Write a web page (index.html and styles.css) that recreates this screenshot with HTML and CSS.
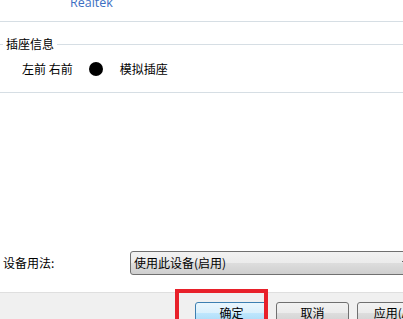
FILE: index.html
```html
<!DOCTYPE html>
<html lang="zh-CN">
<head>
<meta charset="utf-8">
<title>属性</title>
<link rel="stylesheet" href="styles.css">
</head>
<body>
<div class="page">
  <div class="vendor"><span class="vendor-name">Realtek</span></div>
  <div class="group-head"><span class="group-title">插座信息</span></div>
  <div class="jack-row">
    <span class="jack-pos">左前 右前</span>
    <span class="jack-dot"></span>
    <span class="jack-type">模拟插座</span>
  </div>
  <div class="sep"></div>
  <div class="spacer"></div>
  <div class="usage-row">
    <span class="usage-label">设备用法:</span>
    <div class="combo"><span class="combo-text">使用此设备(启用)</span><span class="combo-arrow"></span></div>
  </div>
  <div class="footer">
    <div class="buttons">
      <button class="btn btn-default">确定</button>
      <button class="btn">取消</button>
      <button class="btn">应用(A)</button>
    </div>
    <div class="highlight"></div>
  </div>
</div>
</body>
</html>
```
FILE: styles.css
```css
html, body {
  margin: 0;
  padding: 0;
  background: #ffffff;
}
body {
  font-family: "Noto Sans CJK SC", "Noto Sans", sans-serif;
  font-size: 12px;
  color: #000000;
  overflow: hidden;
}
.page {
  width: 403px;
  height: 319px;
  overflow: hidden;
  display: flex;
  flex-direction: column;
}
.vendor {
  height: 21px;
  border-bottom: 1px solid #d6dee4;
  padding-left: 70px;
  flex: none;
}
.vendor-name {
  display: block;
  font-family: "Open Sans", "Noto Sans", sans-serif;
  font-size: 12.5px;
  line-height: 14px;
  margin-top: -4px;
  color: #3c6fc2;
}
.group-head {
  margin-top: 15px;
  height: 14px;
  display: flex;
  align-items: center;
  flex: none;
}
.group-head::before {
  content: "";
  width: 3px;
  height: 1px;
  background: #d6dee4;
}
.group-head::after {
  content: "";
  flex: 1;
  height: 1px;
  background: #d6dee4;
}
.group-title {
  padding: 0 3px;
  line-height: 14px;
}
.jack-row {
  margin-top: 11px;
  height: 14px;
  padding-left: 22px;
  display: flex;
  align-items: center;
  line-height: 14px;
  flex: none;
}
.jack-dot {
  width: 14px;
  height: 14px;
  border-radius: 50%;
  background: #000000;
  margin-left: 16px;
  margin-right: 17px;
}
.sep {
  margin-top: 16px;
  border-top: 1px solid #d6dee4;
  flex: none;
}
.spacer {
  flex: 1;
}
.usage-row {
  height: 24px;
  display: flex;
  align-items: center;
  padding-left: 3px;
  flex: none;
}
.usage-label {
  width: 127px;
  flex: none;
  line-height: 14px;
}
.combo {
  position: relative;
  flex: none;
  width: 288px;
  height: 24px;
  box-sizing: border-box;
  border: 1px solid #707070;
  border-radius: 3px;
  background: linear-gradient(#f2f2f2 0%, #ebebeb 50%, #dddddd 50%, #cfcfcf 100%);
  display: flex;
  align-items: center;
  padding-left: 3px;
}
.combo-text {
  line-height: 14px;
}
.combo-arrow {
  position: absolute;
  right: 9px;
  top: 9px;
  width: 0;
  height: 0;
  border-left: 3.5px solid transparent;
  border-right: 3.5px solid transparent;
  border-top: 4px solid #000000;
}
.footer {
  position: relative;
  margin-top: 17px;
  height: 26px;
  border-top: 1px solid #dfdfdf;
  background: #f0f0f0;
  flex: none;
}
.buttons {
  display: flex;
  gap: 8px;
  padding-top: 9px;
  padding-left: 195px;
}
.btn {
  flex: none;
  width: 73px;
  height: 23px;
  box-sizing: border-box;
  border: 1px solid #707070;
  border-radius: 3px;
  background: linear-gradient(#f2f2f2 0%, #ebebeb 50%, #dddddd 50%, #cfcfcf 100%);
  font-family: "Noto Sans CJK SC", "Noto Sans", sans-serif;
  font-size: 12px;
  line-height: 14px;
  color: #000000;
  padding: 0 0 2px 0;
  text-align: center;
}
.btn-default {
  border-color: #3c7fb1;
  background: linear-gradient(#eaf6fd 0%, #d9f0fc 50%, #bee6fd 50%, #a7d9f5 100%);
}
.highlight {
  position: absolute;
  left: 175px;
  top: -4px;
  width: 93px;
  height: 40px;
  box-sizing: border-box;
  border: 4px solid #e8202a;
}
```
